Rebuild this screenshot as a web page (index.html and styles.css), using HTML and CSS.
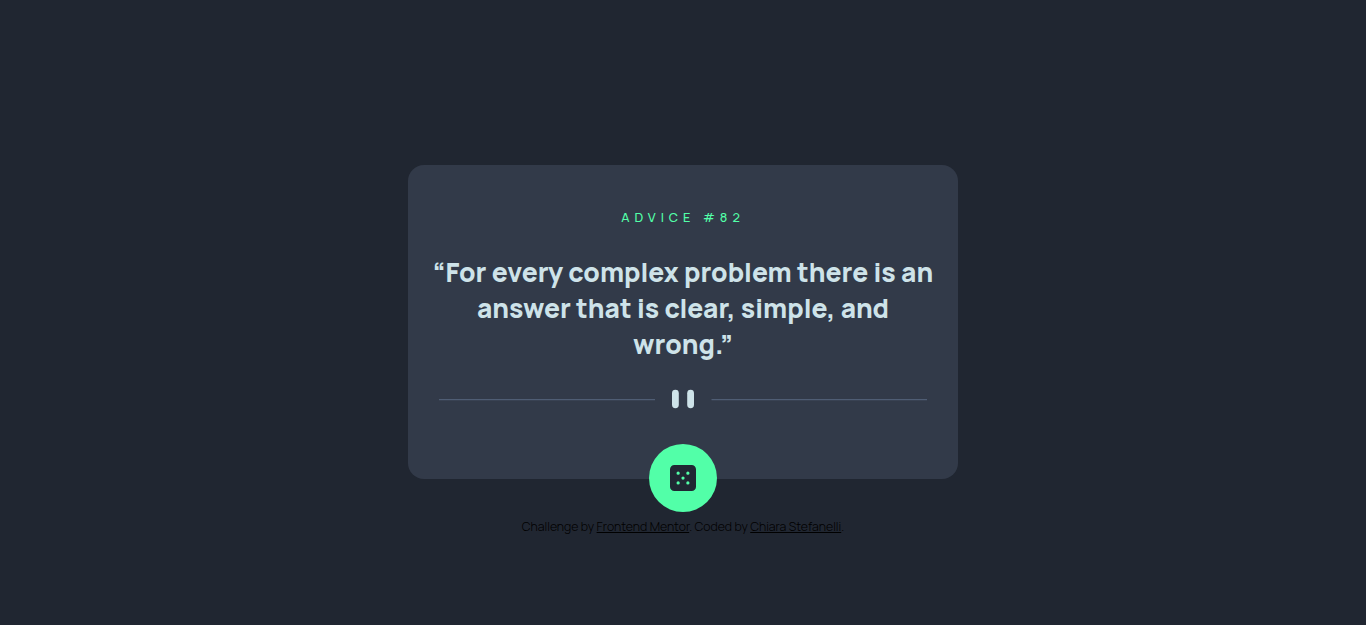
FILE: index.html
```html
<!DOCTYPE html>
<html lang="en">
<head>
<meta charset="utf-8">
<title>Advice generator</title>
<link rel="stylesheet" href="styles.css">
</head>
<body>
<main class="card">
<h1 class="label">ADVICE #82</h1>
<p class="quote">“For every complex problem there is an answer that is clear, simple, and wrong.”</p>
<svg class="divider" width="488" height="20" viewBox="0 0 488 20"><path fill="#4F5D74" d="M0 10h216v1H0zM272.500 10h215.500v1H272.500z"/><path fill="#4F5D74" fill-opacity=".25" d="M0 11h216v1H0zM272.500 11h215.500v1H272.500z"/><g fill="#CEE3E9"><rect x="233" y="0.8" width="6.8" height="18.400" rx="3.4"/><rect x="248.200" y="0.8" width="6.8" height="18.400" rx="3.4"/></g></svg>
<button class="dice" aria-label="New advice"><svg width="26" height="26" viewBox="0 0 24 24"><path fill="#202733" fill-rule="evenodd" d="M20 0H4a4.005 4.005 0 0 0-4 4v16a4.005 4.005 0 0 0 4 4h16a4.005 4.005 0 0 0 4-4V4a4.005 4.005 0 0 0-4-4ZM7.500 18a1.500 1.500 0 1 1 0-3 1.500 1.500 0 0 1 0 3Zm0-9a1.500 1.500 0 1 1 0-3 1.500 1.500 0 0 1 0 3Zm4.500 4.500a1.500 1.500 0 1 1 0-3 1.500 1.500 0 0 1 0 3Zm4.500 4.500a1.500 1.500 0 1 1 0-3 1.500 1.500 0 0 1 0 3Zm0-9a1.500 1.500 0 1 1 0-3 1.500 1.500 0 0 1 0 3Z"/></svg></button>
</main>
<footer class="attribution">Challenge by <a href="#">Frontend Mentor</a>. Coded by <a href="#">Chiara Stefanelli</a>.</footer>
</body>
</html>
```
FILE: styles.css
```css
* { box-sizing: border-box; }
body { margin: 0; min-height: 625px; padding-top: 165px; background: #202631; font-family: Manrope, Inter, sans-serif; display: flex; flex-direction: column; align-items: center; }
.card { width: 550px; height: 314px; border-radius: 16px; background: #323a49; display: flex; flex-direction: column; align-items: center; }
.label { margin: 42px 0 0; height: 20px; line-height: 20px; font-size: 12.8px; font-weight: 500; letter-spacing: 5px; color: #52ffa8; white-space: nowrap; }
.quote { margin: 27px 0 0; width: 504px; font-size: 26.4px; font-weight: 800; line-height: 36px; color: #cee3e9; text-align: center; }
.divider { margin-top: 27px; flex: none; }
.dice { margin-top: 35px; flex: none; width: 68px; height: 68px; padding: 0; border: 0; border-radius: 50%; background: #52ffa8; display: flex; align-items: center; justify-content: center; }
.attribution { margin-top: 40px; font-size: 12.34px; line-height: 16px; font-weight: 300; white-space: nowrap; color: #000; }
.attribution a { color: #000; }
```
